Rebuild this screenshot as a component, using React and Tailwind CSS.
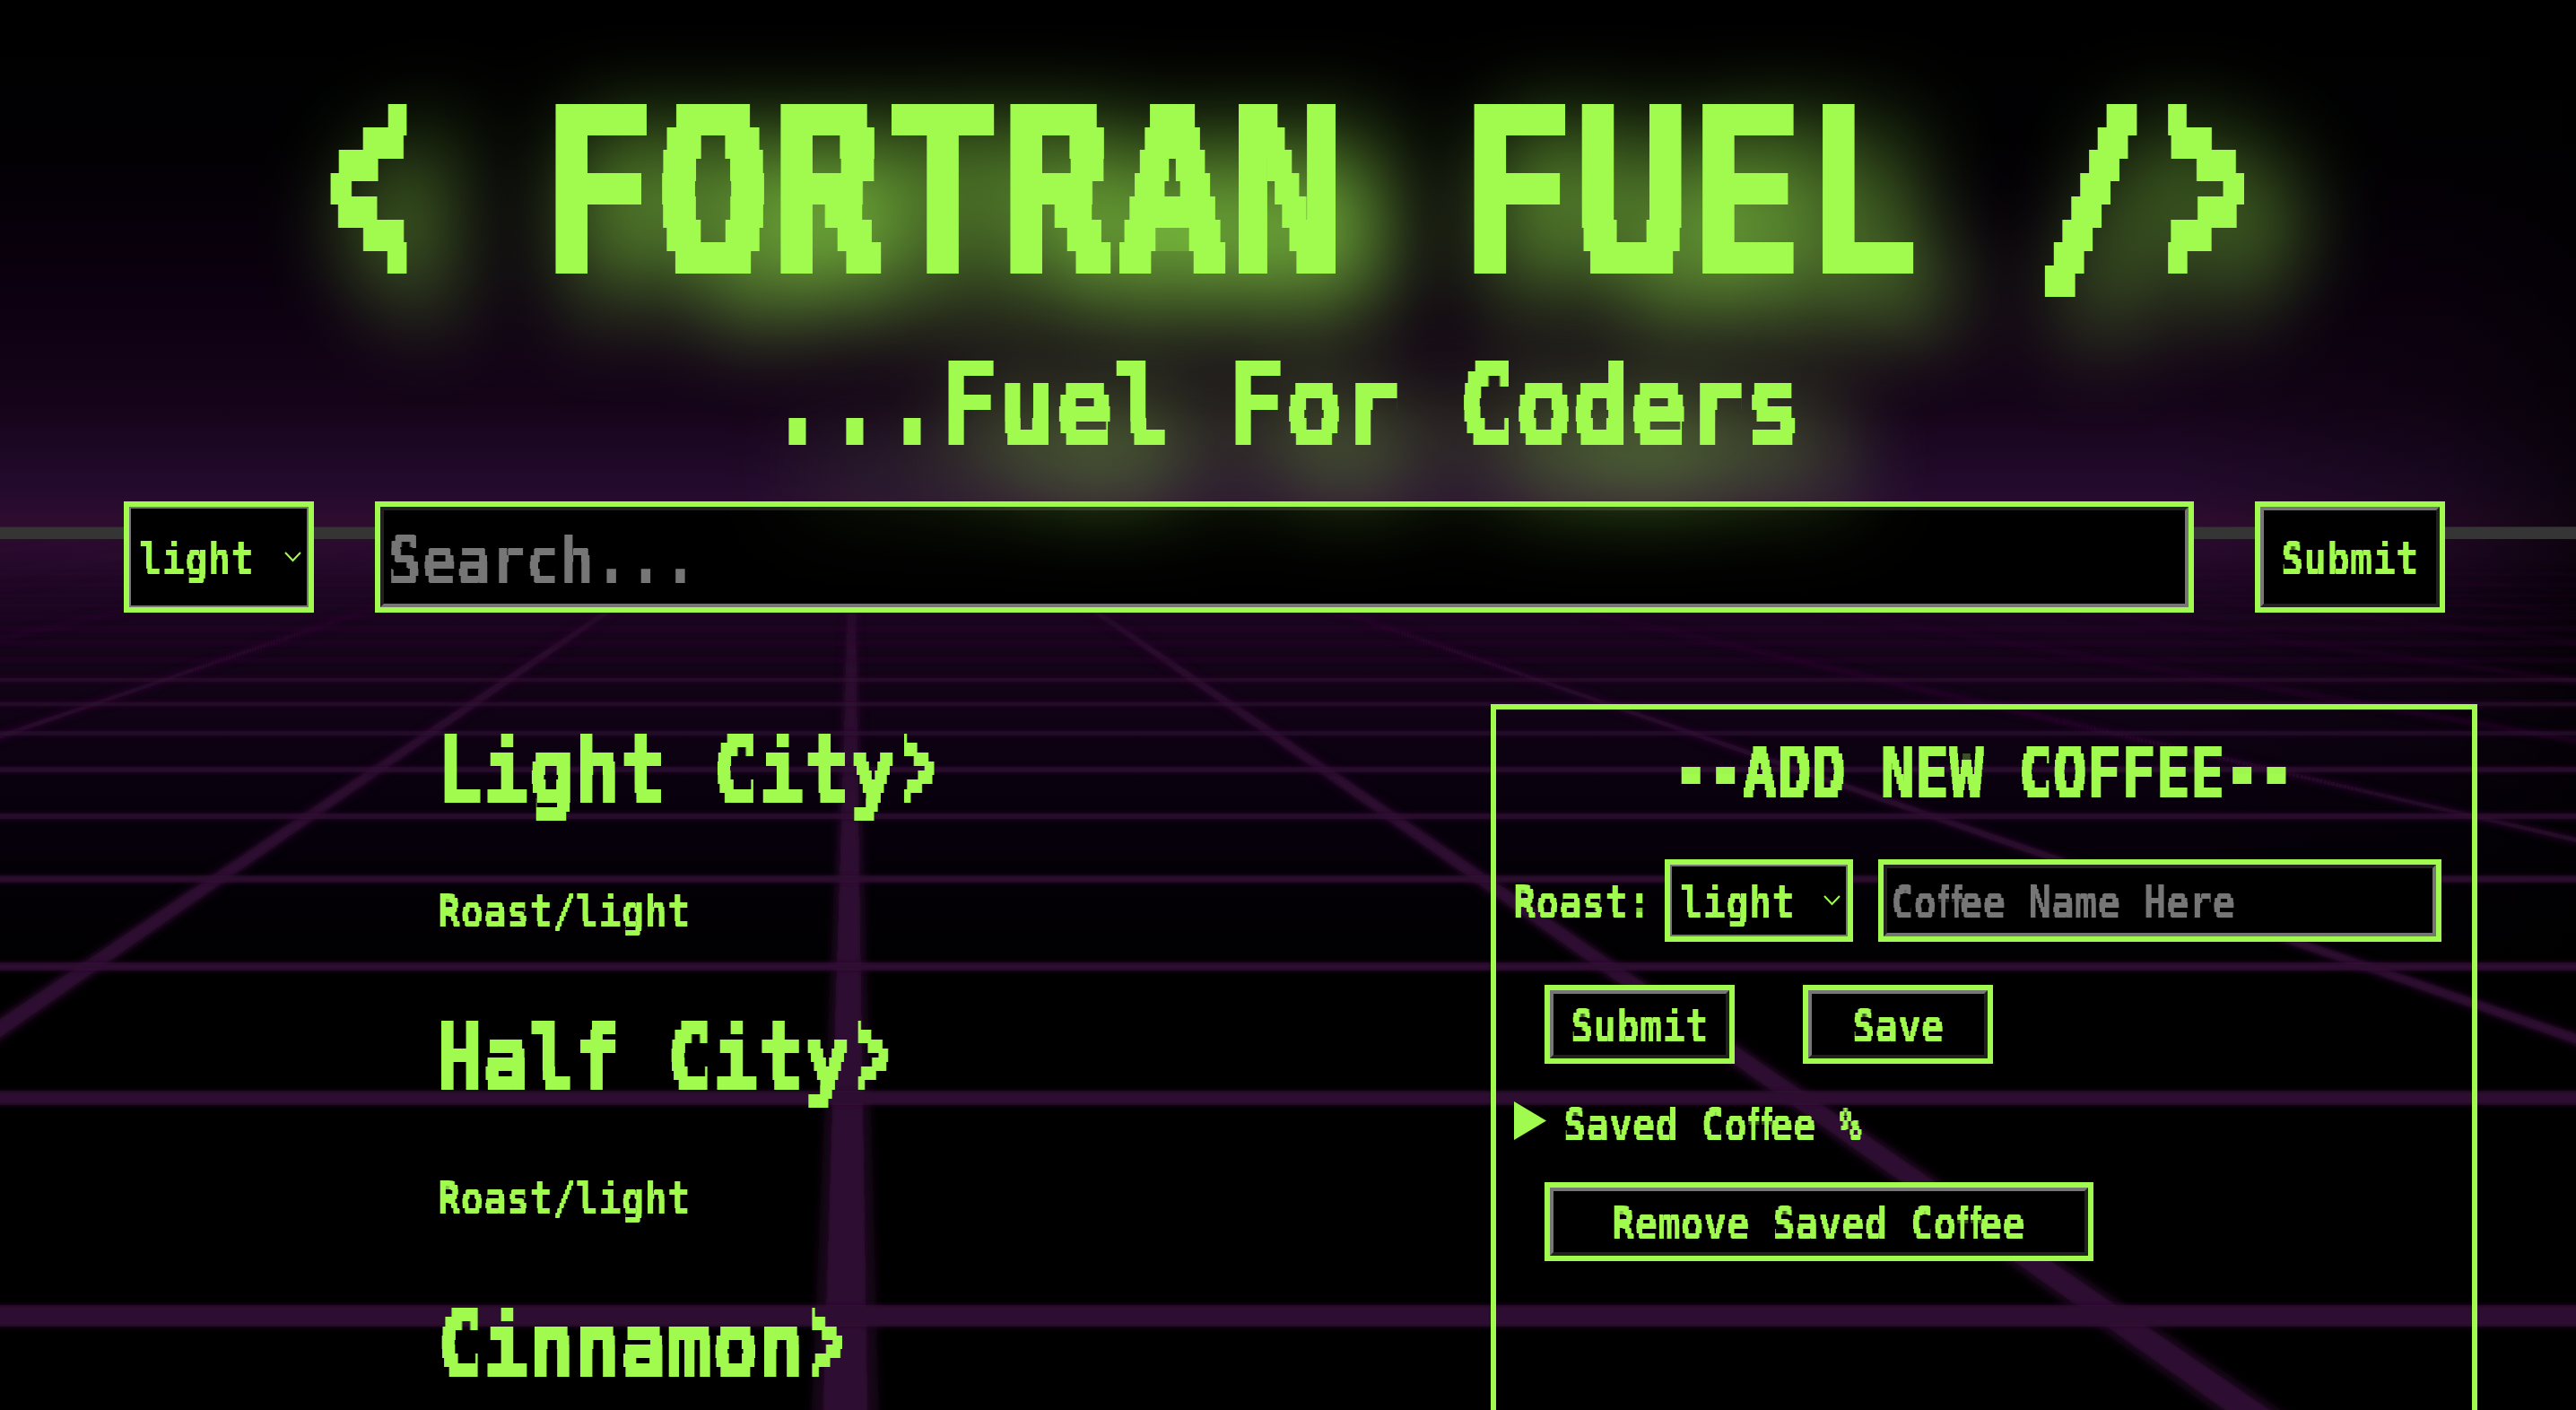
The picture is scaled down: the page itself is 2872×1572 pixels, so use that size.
import React from "react";

const VP = { x: 951, y: 494 };
const BOTTOM = 1600;
const RAYS = [-14, -12, -11, -10, -9, -8, -7, -6, -5, -4, -3, -2, -1, 0, 1, 2, 3, 4, 5, 6, 7, 8, 9, 10, 11, 12, 13, 14, 16];
const ROWS = [
  [640, 2, 0.25], [652, 2, 0.25], [664, 2, 0.3], [675, 2, 0.3], [688, 2, 0.45], [701, 3, 0.5],
  [717, 3, 0.6], [736, 3, 0.6], [758, 5, 0.8], [785, 5, 0.85], [817.5, 5, 0.9], [858, 6, 1],
  [910, 7, 1], [980, 8, 1], [1077.5, 10, 1], [1224, 16, 1], [1467, 25, 1],
];

// A perspective ray that widens from the vanishing point to the bottom edge.
function ray(k, spread) {
  const d = BOTTOM - VP.y;
  const x = VP.x + (k * 1.45 - 0.008) * d;
  const half = (spread * d) / 2;
  return `${VP.x},${VP.y} ${x - half},${BOTTOM} ${x + half},${BOTTOM}`;
}

function Backdrop() {
  return (
    <svg className="absolute inset-0 h-full w-full" viewBox="0 0 2872 1572" preserveAspectRatio="none" aria-hidden="true">
      <defs>
        <linearGradient id="sky" x1="0" y1="0" x2="0" y2="1572" gradientUnits="userSpaceOnUse">
          <stop offset="0" stopColor="#000000" />
          <stop offset="0.1" stopColor="#020003" />
          <stop offset="0.2" stopColor="#0b000f" />
          <stop offset="0.286" stopColor="#150419" />
          <stop offset="0.343" stopColor="#220a2c" />
          <stop offset="0.37" stopColor="#2e0c30" />
          <stop offset="0.392" stopColor="#290b2e" />
          <stop offset="0.42" stopColor="#1e0724" />
          <stop offset="0.46" stopColor="#15041a" />
          <stop offset="0.52" stopColor="#0e0213" />
          <stop offset="0.58" stopColor="#07000c" />
          <stop offset="0.64" stopColor="#030005" />
          <stop offset="0.7" stopColor="#000000" />
        </linearGradient>
        <linearGradient id="edge" x1="0" y1="0" x2="1" y2="0">
          <stop offset="0.84" stopColor="#000" stopOpacity="0" />
          <stop offset="0.95" stopColor="#000" stopOpacity="0.3" />
          <stop offset="1" stopColor="#000" stopOpacity="0.65" />
        </linearGradient>
        <linearGradient id="rise" x1="0" y1="600" x2="0" y2="960" gradientUnits="userSpaceOnUse">
          <stop offset="0" stopColor="#fff" stopOpacity="0.15" />
          <stop offset="0.35" stopColor="#fff" stopOpacity="0.9" />
          <stop offset="1" stopColor="#fff" />
        </linearGradient>
        <mask id="floor" maskUnits="userSpaceOnUse" x="0" y="0" width="2872" height="1572">
          <rect y="601" width="2872" height="971" fill="url(#rise)" />
        </mask>
        <filter id="soft" filterUnits="userSpaceOnUse" x="0" y="560" width="2872" height="1040">
          <feGaussianBlur stdDeviation="2" />
        </filter>
        <filter id="haze" filterUnits="userSpaceOnUse" x="0" y="560" width="2872" height="1040">
          <feGaussianBlur stdDeviation="5" />
        </filter>
      </defs>
      <rect width="2872" height="1572" fill="url(#sky)" />
      <rect width="2872" height="587" fill="url(#edge)" />
      <rect y="601" width="2872" height="971" fill="url(#edge)" />
      <g mask="url(#floor)" fill="#2f0c31">
        <g filter="url(#haze)" opacity="0.5">
          {RAYS.map((k) => <polygon key={k} points={ray(k, 0.07)} />)}
        </g>
        <g filter="url(#soft)">
          {RAYS.map((k) => <polygon key={k} points={ray(k, 0.046)} />)}
        </g>
      </g>
      <g fill="#2f0c31" filter="url(#soft)">
        {ROWS.map(([y, h, o]) => <rect key={y} x="-20" y={y - h / 2} width="2912" height={h} opacity={o} />)}
      </g>
      <rect y="587.5" width="2872" height="13.5" fill="#343534" />
    </svg>
  );
}

// Terminal-style scan rows: the glyphs are sampled on thin strips, and each strip is grown into a dot row.
// h: box height, first: centre of the top row, pitch: distance between rows, r: growth radius, s: strip height.
const SCANS = [
  { id: "scan-title", h: 320, first: 77.5 - 25.7, pitch: 25.7, r: 17, s: 1, rows: 9 },
  { id: "scan-sub", h: 160, first: 39, pitch: 12.85, r: 8, s: 1, rows: 9 },
  { id: "scan-item", h: 128, first: 30.5, pitch: 10.28, r: 7, s: 1, rows: 9 },
  { id: "scan-head", h: 90, first: 20.4, pitch: 7.7, r: 5, s: 1, rows: 7 },
  { id: "scan-search", h: 90, first: 20.6, pitch: 7.7, r: 3, s: 2, rows: 9 },
  { id: "scan-small", h: 60, first: 13.7, pitch: 5.14, r: 2, s: 2, rows: 9 },
];

function ScanFilters() {
  return (
    <svg className="absolute h-0 w-0" aria-hidden="true">
      <defs>
        {SCANS.map((f) => (
          <filter key={f.id} id={f.id} primitiveUnits="objectBoundingBox" x="0" y="0" width="1" height="1" colorInterpolationFilters="sRGB">
            {Array.from({ length: f.rows }, (_, i) => (
              <feFlood key={i} x="0" width="1" y={Math.round(f.first + i * f.pitch - f.s / 2) / f.h} height={f.s / f.h} floodColor="#fff" result={`r${i}`} />
            ))}
            <feMerge x="0" y="0" width="1" height="1" result="grid">
              {Array.from({ length: f.rows }, (_, i) => <feMergeNode key={i} in={`r${i}`} />)}
            </feMerge>
            <feComposite in="SourceGraphic" in2="grid" operator="in" x="0" y="0" width="1" height="1" />
            <feMorphology operator="dilate" radius={`0 ${(f.r + 0.01) / f.h}`} x="0" y="0" width="1" height="1" />
          </filter>
        ))}
      </defs>
    </svg>
  );
}

const FONT = "inline-block origin-left whitespace-pre font-bold";
const Small = ({ children }) => (
  <span className="-my-[5px] block h-[60px] overflow-hidden [filter:url(#scan-small)]">
    <span className={`${FONT} text-[48px] leading-[62px] scale-x-[0.886]`}>{children}</span>
  </span>
);
const FF = () => (
  <span className="inline-block w-[0.602em]">
    <span className="inline-block origin-left scale-x-[0.58] [-webkit-text-stroke:2px_currentColor]">ff</span>
  </span>
);
const Angle = ({ children }) => (
  <span className="inline-block -translate-y-[0.065em] scale-x-[0.74] scale-y-[1.42] leading-[0.75] font-normal">{children}</span>
);

const GREEN = "border-[6px] border-[#a0fb4e] bg-black";
const INSET = "h-full w-full border-4 border-t-[#212121] border-l-[#212121] border-r-[#767676] border-b-[#767676]";
const OUTSET = "h-full w-full border-4 border-t-[#767676] border-l-[#767676] border-r-[#212121] border-b-[#212121]";

function Select({ className }) {
  return (
    <div role="combobox" className={`${GREEN} ${className}`}>
      <div className="flex h-full w-full items-center justify-between border-2 border-[#767676] pr-[6px] pl-[9px]">
        <span className="w-[132px] pt-[2px]"><Small>light</Small></span>
        <svg className="h-[12px] w-[19px] shrink-0" viewBox="0 0 19 12" fill="none" stroke="#a0fb4e" strokeWidth="2">
          <path d="M1 1 L9.5 10 L18 1" />
        </svg>
      </div>
    </div>
  );
}

function Button({ className, textWidth, children }) {
  return (
    <button className={`block ${GREEN} ${className}`}>
      <span className={`${OUTSET} flex items-center justify-center pt-[2px]`}>
        <span className={`${textWidth} text-left`}><Small>{children}</Small></span>
      </span>
    </button>
  );
}

const COFFEES = [
  { name: "Light City", roast: "light" },
  { name: "Half City", roast: "light" },
  { name: "Cinnamon" },
];

export default function App() {
  return (
    <div className="relative h-[1572px] w-[2872px] overflow-hidden bg-black font-['DejaVu_Sans_Mono',monospace] text-[#a0fb4e]">
      <ScanFilters />
      <Backdrop />
      <div className="relative">
        <header className="flex h-[559px] flex-col items-center pt-[56px]">
          <h1 className="h-[320px] w-[2176px] shrink-0 overflow-hidden [filter:url(#scan-title)_drop-shadow(40px_40px_54px_#a0fb4e)]">
            <span className={`${FONT} -ml-px text-[260px] leading-[320px] scale-x-[0.8178] [-webkit-text-stroke:6px_currentColor]`}><Angle>{"<"}</Angle>{" FORTRAN FUEL "}<span className="[-webkit-text-stroke:12px_currentColor]">/</span><Angle>{">"}</Angle></span>
          </h1>
          <h2 className="-mt-[5px] h-[160px] w-[1152px] shrink-0 overflow-hidden [filter:url(#scan-sub)_drop-shadow(40px_40px_54px_#a0fb4e)]">
            <span className={`${FONT} -ml-[3px] text-[122px] leading-[162px] scale-x-[0.8714] [-webkit-text-stroke:2px_currentColor]`}>...Fuel For Coders</span>
          </h2>
        </header>

        <form className="flex h-[124px] gap-[68px] pl-[138px]">
          <Select className="w-[212px]" />
          <div className={`w-[2028px] ${GREEN}`}>
            <div className={`${INSET} flex items-center pt-[6px] pl-1 text-[#767676]`}>
              <span className="block h-[90px] w-[460px] overflow-hidden [filter:url(#scan-search)]">
                <span className={`${FONT} text-[72px] leading-[92px] scale-x-[0.886]`}>Search...</span>
              </span>
            </div>
          </div>
          <Button className="w-[212px]" textWidth="w-[154px]">Submit</Button>
        </form>

        <main className="flex">
          <section className="w-[1662px] pt-[112px] pl-[487px]">
            {COFFEES.map((c) => (
              <article key={c.name} className="h-[320px]">
                <h2 className="h-[128px] w-[700px] overflow-hidden [filter:url(#scan-item)]">
                  <span className={`${FONT} text-[98px] leading-[130px] scale-x-[0.8679] [-webkit-text-stroke:1.5px_currentColor]`}>{c.name}<Angle>{">"}</Angle></span>
                </h2>
                {c.roast && <p className="mt-[67px] ml-[1px] h-[50px]"><Small>{"Roast/" + c.roast}</Small></p>}
              </article>
            ))}
          </section>

          <aside className="mt-[102px] h-[900px] w-[1100px] border-[6px] border-[#a0fb4e] pt-[26px]">
            <h3 className="mx-auto h-[90px] w-[692px] overflow-hidden [filter:url(#scan-head)]">
              <span className={`${FONT} text-[77px] leading-[90px] scale-x-[0.8284] [-webkit-text-stroke:1.5px_currentColor]`}>--ADD NEW COFFEE--</span>
            </h3>
            <div className="mt-[51px] flex h-[92px] items-stretch pl-[19px]">
              <label className="flex w-[169px] items-center pt-[2px]"><Small>Roast:</Small></label>
              <Select className="w-[210px]" />
              <div className={`ml-7 w-[628px] ${GREEN}`}>
                <div className={`${INSET} flex items-center pt-[2px] pl-[4px] text-[#767676]`}>
                  <Small>Co<FF />ee Name Here</Small>
                </div>
              </div>
            </div>
            <div className="mt-12 flex gap-[76px] pl-[54px]">
              <Button className="h-[88px] w-[212px]" textWidth="w-[154px]">Submit</Button>
              <Button className="h-[88px] w-[212px]" textWidth="w-[102px]">Save</Button>
            </div>
            <div className="mt-[42px] flex h-[50px] gap-[19px] pl-[20px]">
              <svg className="h-[43px] w-[36px]" viewBox="0 0 36 43" fill="#a0fb4e"><path d="M0 0 L36 21.5 L0 43 Z" /></svg>
              <Small>Saved Co<FF />ee %</Small>
            </div>
            <div className="mt-10 pl-[54px]">
              <Button className="h-[88px] w-[612px]" textWidth="w-[462px]">Remove Saved Co<FF />ee</Button>
            </div>
          </aside>
        </main>
      </div>
    </div>
  );
}
